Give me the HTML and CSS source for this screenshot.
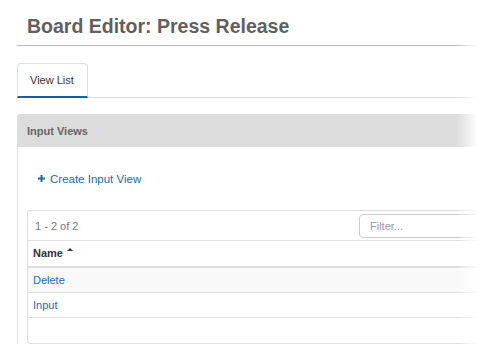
FILE: index.html
```html
<!DOCTYPE html>
<html lang="en">

<head>
    <meta charset="UTF-8" />
    <meta name="viewport" content="width=device-width, initial-scale=1.0" />
    <title>Board Editor: Press Release</title>
    <link rel="stylesheet" href="styles.css">
</head>

<body>
    <div class="page">
        <h1 class="page-title">Board Editor: Press Release</h1>

        <!-- tabs -->
        <ul class="tabs">
            <li class="active">View List</li>
        </ul>

        <div class="panel">
            <div class="panel-heading">Input Views</div>
            <div class="panel-body">
                <a class="create-link" href="#">
                    <svg class="plus" width="7" height="7" viewBox="0 0 7 7">
                        <rect x="0" y="2.5" width="7" height="2" fill="currentColor" />
                        <rect x="2.5" y="0" width="2" height="7" fill="currentColor" />
                    </svg>
                    Create Input View
                </a>

                <div class="grid">
                    <div class="grid-toolbar">
                        <span class="count">1 - 2 of 2</span>
                        <input class="filter" type="text" placeholder="Filter..." />
                    </div>
                    <div class="grid-head">
                        Name <span class="sort-up"></span>
                    </div>
                    <div class="grid-row alt"><a href="#">Delete</a></div>
                    <div class="grid-row"><a href="#">Input</a></div>
                    <div class="grid-footer"></div>
                </div>
            </div>
        </div>
    </div>
    <!-- fade on the right edge -->
    <div class="fade"></div>
</body>

</html>
```

FILE: styles.css
```css
* {
    box-sizing: border-box;
}

html,
body {
    overflow: hidden;
}

body {
    margin: 0;
    font-family: "Liberation Sans", Arial, sans-serif;
    background: #fff;
    color: #333;
    position: relative;
    height: 348px;
}

.page {
    padding-left: 17px;
}

.page-title {
    margin: 0;
    padding: 15px 10px 7px;
    font-size: 19.5px;
    line-height: 23px;
    font-weight: bold;
    color: #606060;
    border-bottom: 1px solid #bbb;
}

.tabs {
    list-style: none;
    margin: 17px 0 0;
    padding: 0;
    display: flex;
    border-bottom: 1px solid #ddd;
}

.tabs li {
    height: 35px;
    margin-bottom: -1px;
    padding: 0 13px 0 12px;
    font-size: 11px;
    line-height: 32px;
    color: #333;
    border: 1px solid #ddd;
    border-bottom: 2px solid #0b62a6;
    border-radius: 4px 4px 0 0;
}

.panel {
    margin-top: 16px;
    border-left: 1px solid #ddd;
    border-radius: 4px 0 0 0;
}

.panel-heading {
    height: 33px;
    margin-left: -1px;
    padding-left: 10px;
    background: #dcdcdc;
    font-size: 11px;
    font-weight: bold;
    line-height: 34px;
    color: #666;
    border-radius: 4px 0 0 0;
}

.panel-body {
    padding: 24px 0 0 9px;
}

.create-link {
    display: flex;
    align-items: center;
    gap: 5px;
    padding-left: 11px;
    height: 16px;
    font-size: 11.5px;
    color: #1a6bb0;
    text-decoration: none;
}

.plus {
    display: block;
    margin-top: -1px;
}

.grid {
    margin-top: 23px;
    border: 1px solid #ddd;
    border-right: none;
    border-radius: 4px 0 0 4px;
}

.grid-toolbar {
    height: 30px;
    display: flex;
    align-items: center;
    padding-left: 7px;
    border-bottom: 1px solid #ddd;
    font-size: 11px;
    color: #777;
}

.filter {
    margin-left: auto;
    width: 125px;
    height: 24px;
    padding: 0 10px;
    border: 1px solid #ccc;
    border-radius: 4px 0 0 4px;
    font-family: inherit;
    font-size: 11px;
    outline: none;
}

.filter::placeholder {
    color: #999;
}

.grid-head {
    height: 27px;
    padding-left: 5px;
    font-size: 11px;
    font-weight: bold;
    line-height: 25px;
    color: #333;
    border-bottom: 2px solid #ddd;
}

.sort-up {
    display: inline-block;
    width: 0;
    height: 0;
    margin-left: 1px;
    vertical-align: 6px;
    border-left: 3.5px solid transparent;
    border-right: 3.5px solid transparent;
    border-bottom: 3.5px solid #333;
}

.grid-row {
    height: 25px;
    padding: 1px 0 0 5px;
    font-size: 11px;
    line-height: 23px;
    border-bottom: 1px solid #ddd;
}

.grid-row.alt {
    background: #f9f9f9;
}

.grid-row a {
    color: #1a6bb0;
    text-decoration: none;
}

.grid-footer {
    height: 25px;
}

.fade {
    position: absolute;
    top: 0;
    right: 0;
    bottom: 0;
    width: 28px;
    background: linear-gradient(to right, rgba(255, 255, 255, 0) 0, #fff 22px);
}
```
